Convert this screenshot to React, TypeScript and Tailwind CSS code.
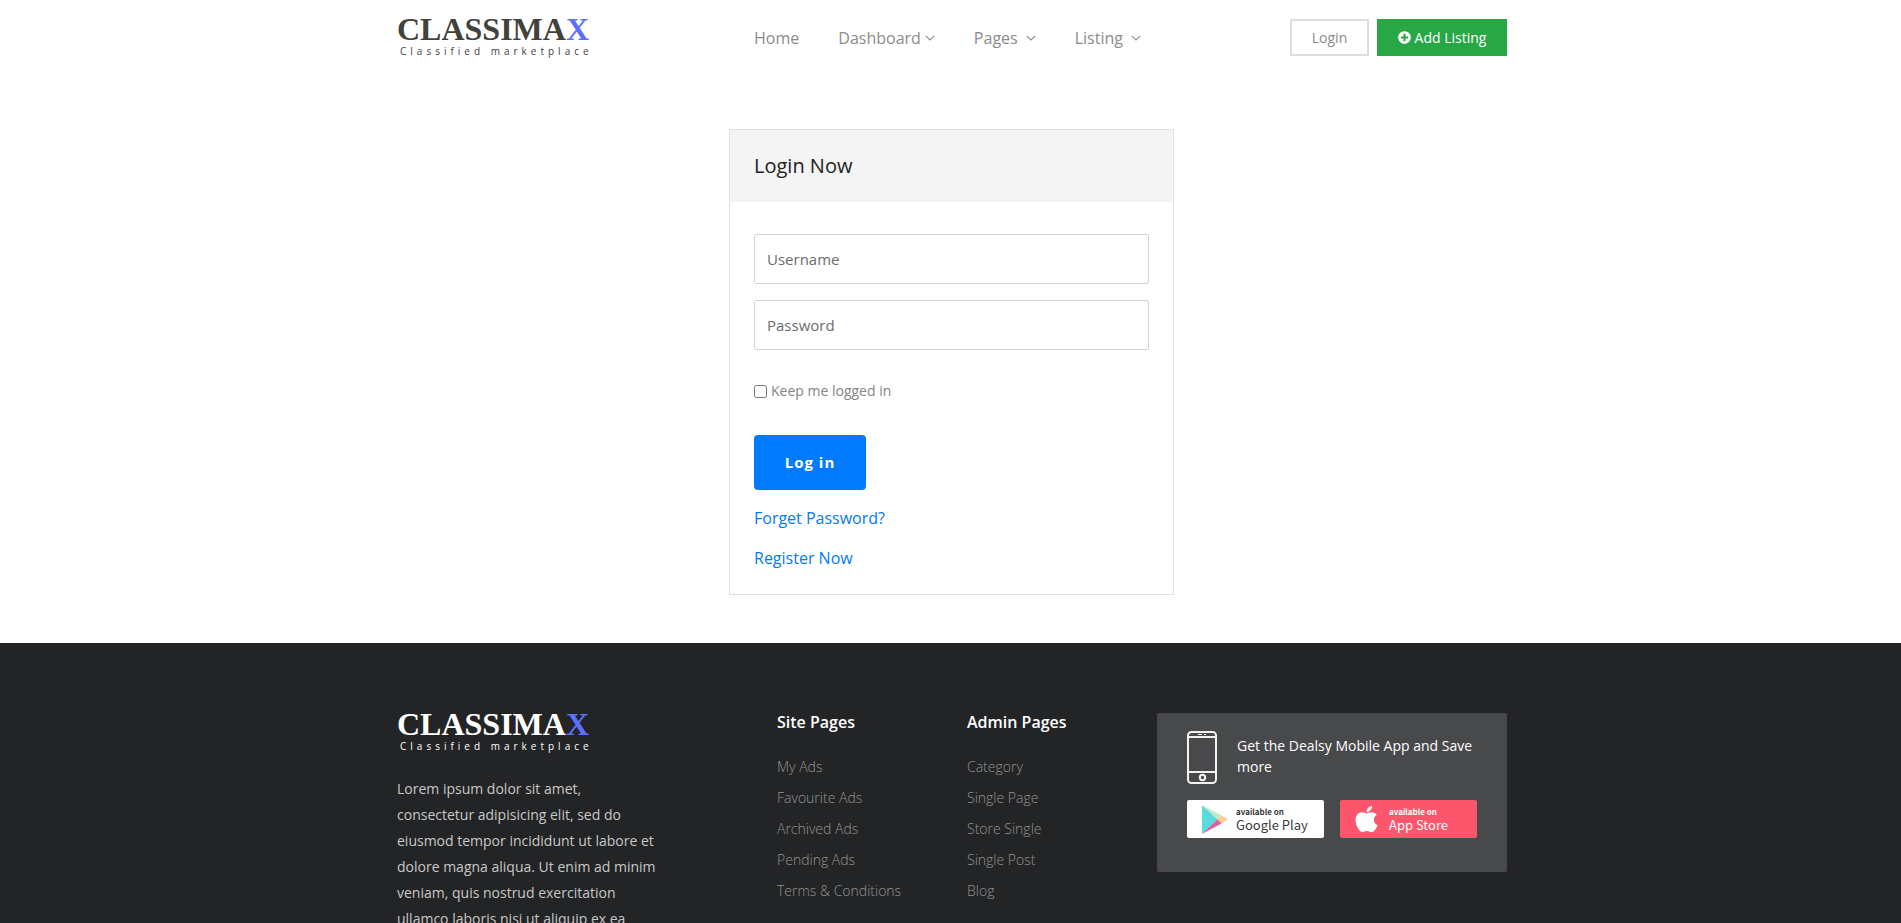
import type { ReactNode } from 'react';
import { FaApple, FaPlusCircle } from 'react-icons/fa';

function Logo({ dark = false }: { dark?: boolean }) {
  return (
    <a href="#" className={`block h-10 w-48 shrink-0 whitespace-nowrap ${dark ? 'text-white' : 'text-[#42423d]'}`}>
      <span className="block h-[26px] font-['Liberation_Serif',serif] text-[32px] leading-[22px] font-bold">
        CLASSIMA<span className="text-[#5a71ff]">X</span>
      </span>
      <span className="block pl-[3px] text-[10px] leading-[14px] tracking-[4px]">Classified marketplace</span>
    </a>
  );
}

function Chevron() {
  return (
    <svg width="10" height="6" viewBox="0 0 10 6" fill="none" stroke="currentColor" strokeWidth="1.1" aria-hidden="true">
      <path d="M0.8 0.8 5 5 9.2 0.8" />
    </svg>
  );
}

function NavItem({ label, gap }: { label: string; gap?: string }) {
  return (
    <a href="#" className={`flex items-center ${gap ?? ''}`}>
      {label}
      {gap && <Chevron />}
    </a>
  );
}

function PhoneIcon() {
  return (
    <svg width="30" height="53" viewBox="0 0 30 53" fill="none" stroke="#f2f2f2" strokeWidth="2" className="shrink-0" aria-hidden="true">
      <rect x="1" y="1" width="28" height="51" rx="3.5" />
      <path d="M1 6H29M1 41H29" />
      <path d="M11 3.5H15M17 3.5H19" strokeWidth="1" />
      <circle cx="15.5" cy="46.5" r="2.7" />
    </svg>
  );
}

function PlayIcon() {
  return (
    <svg width="26" height="29" viewBox="0 0 26 29" aria-hidden="true">
      <path d="M0 0V29L15.5 14.3Z" fill="#5bdade" />
      <path d="M0 0 19.5 10.4 15.5 14.3Z" fill="#bdecc4" />
      <path d="M19.5 10.4 26 14.3 19.5 18.4 15.5 14.3Z" fill="#ffcb95" />
      <path d="M0 29 15.5 14.3 19.5 18.4Z" fill="#de5fa0" />
    </svg>
  );
}

function StoreBadge({ icon, store, className }: { icon: ReactNode; store: string; className: string }) {
  return (
    <a href="#" className={`flex h-[38px] flex-1 items-center rounded-xs pl-[15px] ${className}`}>
      <span className="flex w-[34px] shrink-0">{icon}</span>
      <span className="font-['Noto_Sans_CJK_SC',sans-serif] whitespace-nowrap">
        <span className="block text-[8px] leading-[10px] font-bold">available on</span>
        <span className="block text-[13px] leading-[15px]">{store}</span>
      </span>
    </a>
  );
}

function LinkColumn({ title, links }: { title: string; links: string[] }) {
  return (
    <div className="w-[190px] px-[15px]">
      <h3 className="mb-6 text-base leading-[19px] font-semibold text-white">{title}</h3>
      <ul className="flex flex-col gap-2.5 text-sm leading-[21px] font-light whitespace-nowrap text-[#949494]">
        {links.map((link) => (
          <li key={link}>
            <a href="#">{link}</a>
          </li>
        ))}
      </ul>
    </div>
  );
}

export default function App() {
  return (
    <div className="h-screen overflow-x-hidden overflow-y-auto bg-white font-['Open_Sans',sans-serif] [scrollbar-width:none]">
      <header className="pl-[3px]">
        <div className="mx-auto flex h-[75px] max-w-[1140px] items-center px-[15px]">
          <Logo />
          <nav className="ml-auto flex items-center gap-[39px] pl-4 text-base text-[#8c8c8c]">
            <NavItem label="Home" />
            <NavItem label="Dashboard" gap="gap-1" />
            <NavItem label="Pages" gap="gap-2" />
            <NavItem label="Listing" gap="gap-2" />
          </nav>
          <div className="ml-auto flex gap-2 text-sm">
            <a href="#" className="flex h-[37px] w-[79px] items-center justify-center border-2 border-[#dedede] text-[#8c8c8c]">
              Login
            </a>
            <a href="#" className="flex h-[37px] w-[130px] items-center justify-center gap-1 bg-[#28a745] whitespace-nowrap text-white">
              <FaPlusCircle size={13} />
              Add Listing
            </a>
          </div>
        </div>
      </header>

      <main className="pt-[54px] pb-12 pl-0.5">
        <section className="mx-auto max-w-[445px] border border-[#dee2e6]">
          <h1 className="bg-[#f4f4f4] px-6 py-6 text-xl leading-6 text-[#222]">Login Now</h1>
          <form className="px-6 pt-8 pb-6" onSubmit={(e) => e.preventDefault()}>
            <input
              type="text"
              aria-label="Username"
              placeholder="Username"
              className="mb-4 block h-[50px] w-full rounded-xs border border-[#ced4da] px-3 text-[15px] placeholder:text-[#6c6c6c]"
            />
            <input
              type="password"
              aria-label="Password"
              placeholder="Password"
              className="block h-[50px] w-full rounded-xs border border-[#ced4da] px-3 text-[15px] placeholder:text-[#6c6c6c]"
            />
            <div className="mt-[29px] mb-8 flex h-6 items-center gap-1 text-sm text-[#848484]">
              <input id="keep" type="checkbox" className="size-[13px]" />
              <label htmlFor="keep">Keep me logged in</label>
            </div>
            <button
              type="submit"
              className="block h-[55px] w-28 rounded bg-[#007bff] text-[15px] font-bold tracking-[1px] text-white"
            >
              Log in
            </button>
            <a href="#" className="mt-4 block w-fit leading-6 text-[#007bff]">
              Forget Password?
            </a>
            <a href="#" className="mt-4 block w-fit leading-6 text-[#007bff]">
              Register Now
            </a>
          </form>
        </section>
      </main>

      <footer className="bg-[#232426] pt-[70px] pb-16 pl-[3px]">
        <div className="mx-auto flex max-w-[1140px] items-start">
          <div className="w-[380px] pl-[15px]">
            <Logo dark />
            <p className="mt-[23px] max-w-[264px] text-sm leading-[26px] text-[#c8c8c8]">
              Lorem ipsum dolor sit amet, consectetur adipisicing elit, sed do eiusmod tempor incididunt ut labore et
              dolore magna aliqua. Ut enim ad minim veniam, quis nostrud exercitation ullamco laboris nisi ut aliquip
              ex ea commodo consequat.
            </p>
          </div>
          <LinkColumn
            title="Site Pages"
            links={['My Ads', 'Favourite Ads', 'Archived Ads', 'Pending Ads', 'Terms & Conditions']}
          />
          <LinkColumn title="Admin Pages" links={['Category', 'Single Page', 'Store Single', 'Single Post', 'Blog']} />
          <div className="flex-1 px-[15px]">
            <div className="rounded-xs bg-[#48494b] px-[30px] pt-[18px] pb-[34px]">
              <div className="flex items-center gap-5">
                <PhoneIcon />
                <p className="pb-1 text-sm leading-[21px] text-white">Get the Dealsy Mobile App and Save more</p>
              </div>
              <div className="mt-4 flex gap-4">
                <StoreBadge icon={<PlayIcon />} store="Google Play" className="bg-white text-[#3a3a3a]" />
                <StoreBadge
                  icon={<FaApple className="h-[30px] w-[23px]" />}
                  store="App Store"
                  className="bg-[#fb566b] text-white"
                />
              </div>
            </div>
          </div>
        </div>
      </footer>
    </div>
  );
}
